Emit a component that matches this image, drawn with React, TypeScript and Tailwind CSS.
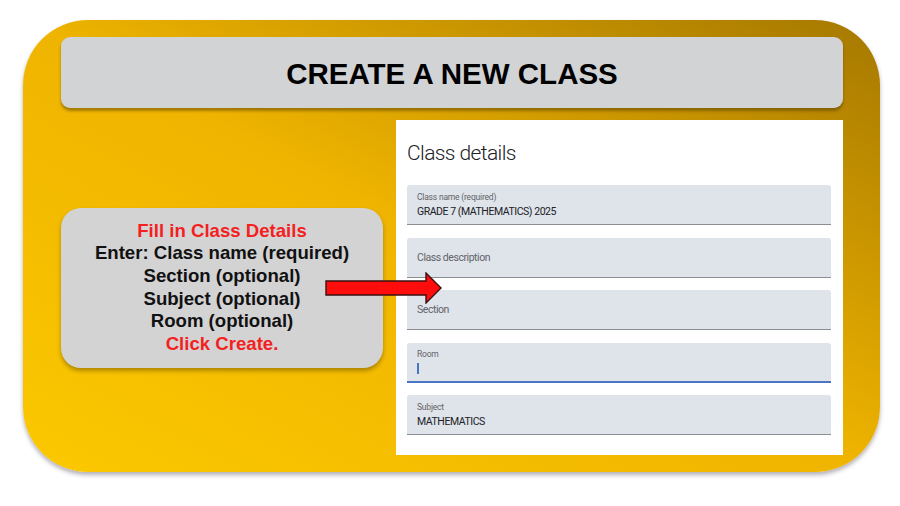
import React from 'react';

type Field = {
  label: string;
  value?: string;
  focused?: boolean;
};

const fields: Field[] = [
  { label: 'Class name (required)', value: 'GRADE 7 (MATHEMATICS) 2025' },
  { label: 'Class description' },
  { label: 'Section' },
  { label: 'Room', value: '', focused: true },
  { label: 'Subject', value: 'MATHEMATICS' },
];

function FormField({ field }: { field: Field }) {
  const floated = field.value !== undefined;
  return (
    <div
      className={`h-[40px] bg-[#dfe3ea] rounded-t-[3px] px-[10px] flex flex-col justify-center ${
        field.focused ? 'border-b-2 border-[#4a74c4]' : 'border-b border-[#8a8d92]'
      }`}
    >
      {floated ? (
        <>
          <span className="text-[8.5px] leading-[11px] tracking-[-0.2px] text-[#5f6368]">{field.label}</span>
          {field.focused ? (
            <span className="mt-[3px] w-[1.5px] h-[11px] bg-[#4a74c4]" />
          ) : (
            <span className="mt-[2px] text-[10.5px] leading-[13px] tracking-[-0.45px] text-[#202124]">
              {field.value}
            </span>
          )}
        </>
      ) : (
        <span className="text-[10.5px] leading-[13px] tracking-[-0.45px] text-[#5f6368]">{field.label}</span>
      )}
    </div>
  );
}

function Arrow() {
  return (
    <svg
      className="absolute left-[325px] top-[272px]"
      width="118"
      height="32"
      viewBox="0 0 118 32"
    >
      <path
        d="M1 9 H101 V1 L116 16 L101 31 V23 H1 Z"
        fill="#ff0d0d"
        stroke="#3a1010"
        strokeWidth="1.4"
        strokeLinejoin="miter"
      />
    </svg>
  );
}

export default function App() {
  return (
    <div className="relative w-[900px] h-[506px] bg-white overflow-hidden">
      <div className="ml-[23px] mt-[20px] w-[857px] h-[452px] rounded-[65px] bg-linear-to-tr from-[#fbc800] via-[#efb400] to-[#a57800] shadow-[0_3px_4px_rgba(90,80,100,0.45)] pl-[38px] pr-[37px] pt-[17px]">
        {/* Heading bar */}
        <div className="h-[71px] rounded-[9px] bg-[#d2d3d5] shadow-[0_3px_3px_rgba(70,50,0,0.45)] flex items-center justify-center">
          <h1 className="font-['Liberation_Sans',Arial,sans-serif] font-bold text-[29.5px] leading-none text-black pt-[2px]">
            CREATE A NEW CLASS
          </h1>
        </div>

        <div className="mt-[12px] flex items-center gap-[13px]">
          {/* Instruction callout */}
          <div className="w-[322px] h-[160px] rounded-[20px] bg-[#d3d3d4] shadow-[0_3px_4px_rgba(70,50,0,0.4)] flex flex-col items-center justify-center font-['Liberation_Sans',Arial,sans-serif] font-bold text-[18.6px] leading-[22.6px] text-[#111]">
            <span className="text-[#f41f1f]">Fill in Class Details</span>
            <span>Enter: Class name (required)</span>
            <span>Section (optional)</span>
            <span>Subject (optional)</span>
            <span>Room (optional)</span>
            <span className="text-[#f41f1f]">Click Create.</span>
          </div>

          {/* Class details form */}
          <div className="w-[447px] h-[335px] bg-white pl-[11px] pr-[12px] pt-[18px] font-['Roboto',sans-serif]">
            <h2 className="text-[21px] leading-[30px] font-light text-[#202124] tracking-[-0.6px]">
              Class details
            </h2>
            <div className="mt-[17px] flex flex-col gap-[12.5px]">
              {fields.map((f) => (
                <FormField key={f.label} field={f} />
              ))}
            </div>
          </div>
        </div>
      </div>
      <Arrow />
    </div>
  );
}
